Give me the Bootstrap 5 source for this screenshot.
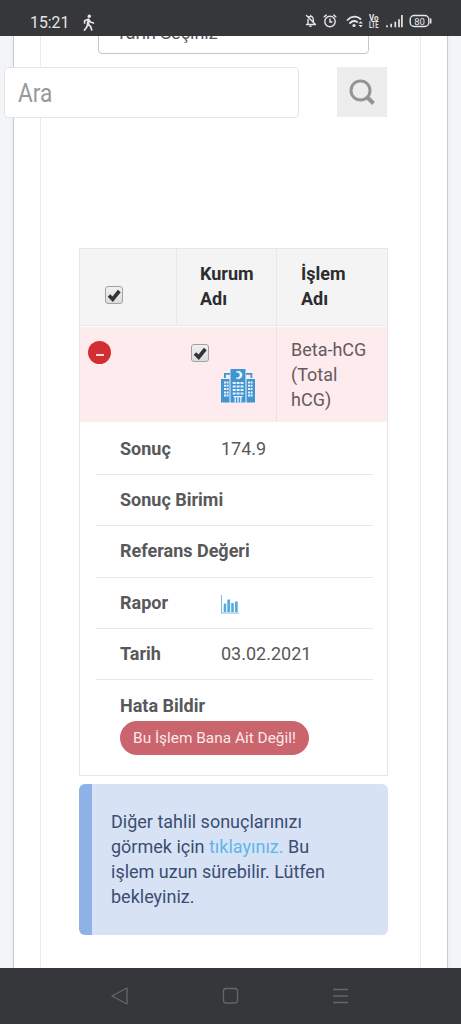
<!DOCTYPE html>
<html lang="tr">
<head>
<meta charset="utf-8">
<meta name="viewport" content="width=device-width, initial-scale=1">
<title>Tahlil Sonuçları</title>
<link href="https://cdn.jsdelivr.net/npm/bootstrap@5.3.0/dist/css/bootstrap.min.css" rel="stylesheet">
<style>
body{font-family:Roboto,"Liberation Sans",sans-serif;font-size:18px;line-height:25px;color:#58585b;background:#f3f5f8}
svg{display:block;flex:none}
.screen{height:1024px}
.statusbar{height:36px;background:#36373a;color:#e6e6e6;padding:10px 29px 0 30px;z-index:3}
.clock{font-size:15.800px;width:53px;line-height:26px}
.page{height:932px}
.sheet{margin:0 13px;height:932px;background:#fff;border:1px solid #c9cccf;border-width:0 1px;padding:0 26px;box-shadow:0 0 3px #e4e6ea}
.panel{height:932px;border:1px solid #ebebed;border-width:0 1px;padding:0 32px 0 38px}
.date-field{height:34px;margin:-16px 19px 0;border:1px solid #c4c7ca;border-radius:4px;padding:0 17px;line-height:23px;color:#555}
.searchbar{top:31px;left:4px;width:383px}
.search-input{width:295px;height:51px;border:1px solid #e4e5e7;border-radius:4px;background:#fff;padding:0 13px;color:#999;font-size:26px;line-height:51px}
.search-input span{display:inline-block;transform:scaleX(.87);transform-origin:0 50%}
.search-btn{width:50px;height:50px;background:#ededee}
.results{margin-top:194px;width:309px;border:1px solid #e4e6e8}
.cols{display:grid;grid-template-columns:97px 100px 1fr}
.head{height:77px;background:#f4f4f5;color:#2d2d30;font-weight:700;border-bottom:1px solid #e6e8ea}
.head>div{border-right:1px solid #e6e8ea}
.head>div:last-child{border-right:0}
.hit{height:95px;background:#feebed;margin-top:1px;color:#655a5e}
.hit>div:nth-child(2){border-right:1px solid #f0dfe2}
.tick{width:18px;height:18px;border:1px solid #a2a2a4;border-radius:3px;background:linear-gradient(#efeff0,#dcdcdd)}
.minus{width:23px;height:23px;border-radius:50%;background:#d32f32}
.minus i{width:8px;height:2px;background:#fbdada}
.detail{margin:0 14px 0 16px}
.line{height:51.300px;padding:12px 24px 0;border-bottom:1px solid #e9e9eb}
.line:first-child{height:53px;padding-top:14px}
.line:last-child{border:0;height:95px;padding-top:13px}
.line b{display:block;width:101px;white-space:nowrap;font-weight:700}
.report{width:189px;height:34px;margin-top:3px;border-radius:17px;background:#ca646d;color:#fbe9ea;font-size:15.400px;border:0;padding:0}
.note{width:309px;height:151px;margin-top:8px;border-radius:6px;background:#d7e3f5;border-left:13px solid #8eb2e7;color:#3b4d72;padding:25px 19px}
.note a{color:#62b5ea;text-decoration:none}
.navbtns{height:56px;background:#36373a;z-index:3}
</style>
</head>
<body>
<div class="screen d-flex flex-column overflow-hidden">
  <header class="statusbar d-flex position-relative">
    <span class="clock">15:21</span>
    <svg width="12" height="18" viewBox="0 0 12 18" style="margin-top:4px" fill="none" stroke="#e6e6e6" stroke-width="1.700" stroke-linecap="round" stroke-linejoin="round"><circle cx="6.300" cy="2.300" r="1.700" fill="#e6e6e6" stroke="none"/><path d="M1.600 9V6.800L5.300 5.200 7.500 8l3 1M4.700 10l3 2.600L8.700 16M4.500 10.500L3.800 13 1.500 16"/><path stroke-width="2.600" d="M5.600 6L5 10"/></svg>
    <svg class="ms-auto" width="127" height="20" viewBox="305 12 127 20" fill="none" stroke="#e6e6e6" stroke-width="1.400" stroke-linecap="round">
      <path d="M306.500 26.500h8M308 26v-4.500M308.500 19.500c1-1.500 3.500-1.500 4.300 0 .6 1 .5 3 .7 4M310 28.300h1M310.700 17.500v1M306.500 17.500l9 9"/>
      <circle cx="330" cy="23.500" r="5.200"/><path d="M330 21v3h2M324.200 18.800l2-1.700M335.800 18.800l-2-1.700"/>
      <path stroke-width="1.800" d="M347.500 22c4-4.300 9.500-4.300 13-1M350 25c2.500-2.500 5-2.500 7.200-1"/><circle cx="354" cy="27.500" r="1.600" fill="#e6e6e6" stroke="none"/>
      <path d="M358.500 25.500l2.200-2.200 2.200 2.200zM358.500 27l2.200 2.200 2.200-2.200z" fill="#e6e6e6" stroke="none"/>
      <g fill="#e6e6e6" stroke="none" font-family="Roboto,sans-serif" font-weight="700" font-size="8.500"><text x="369" y="22.600" textLength="9.500" lengthAdjust="spacingAndGlyphs">Vo</text><text x="369" y="29.500" textLength="9.500" lengthAdjust="spacingAndGlyphs">LTE</text></g>
      <path stroke-width="1.700" stroke-linecap="butt" d="M387 29.300v-2M391.200 29.300v-3.500M395.300 29.300v-5.500M399 29.300v-8M401.900 29.300V17"/>
      <rect x="410.200" y="17.500" width="18.600" height="11" rx="4"/><path d="M430.700 21v4" stroke-width="1.500"/>
      <text x="414.200" y="26.500" fill="#e6e6e6" stroke="none" font-family="Roboto,sans-serif" font-size="9.500">80</text>
    </svg>
  </header>

  <main class="page position-relative overflow-hidden">
    <div class="sheet">
      <div class="panel overflow-hidden">
        <div class="date-field">Tarih Seçiniz</div>

        <section class="results">
          <div class="head cols">
            <div><div class="tick" style="margin:37px 0 0 25px"><svg width="16" height="16" viewBox="0 0 16 16"><path d="M3 8.500l3.700 3.700L13.300 4" fill="none" stroke="#333" stroke-width="3.600"/></svg></div></div>
            <div class="pt-2"><div style="padding:4px 0 0 23px">Kurum<br>Adı</div></div>
            <div class="pt-2"><div style="padding:4px 0 0 24px">İşlem<br>Adı</div></div>
          </div>
          <div class="hit cols">
            <div><div class="minus d-flex align-items-center justify-content-center" style="margin:14px 0 0 8px"><i class="mt-1"></i></div></div>
            <div>
              <div class="tick" style="margin:17px 0 0 14px"><svg width="16" height="16" viewBox="0 0 16 16"><path d="M3 8.500l3.700 3.700L13.300 4" fill="none" stroke="#333" stroke-width="3.600"/></svg></div>
              <svg width="34" height="35" viewBox="0 0 34 35" style="margin:6px 0 0 44px" fill="#4096d3">
                <path d="M0 11h8.500v23.500H0zM9.500 1h15v33.500h-15zM25.500 11H34v23.500h-8.500zM3 5h6v1.800H4.800V10H3zM25 5h6.300v5h-1.800V6.800H25z"/>
                <path d="M15 4c2-1.500 6-.8 6 3s-4 4.500-6 3c2.500 0 4-1 4-3s-1.500-3-4-3z" fill="#fff" stroke="#fff" stroke-width=".5"/>
                <g stroke="#e9f1fa" stroke-width="2.200" fill="none"><path stroke-dasharray="3 .9" d="M11.700 15h11M11.700 18.500h11M11.700 22h11M11.700 25.500h11"/><path stroke-width="2" stroke-dasharray="2 .6" d="M3 14.500h5M3 17.800h5M3 21.100h5M3 24.400h5M3 27.500h5M27 14.500h5M27 17.800h5M27 21.100h5M27 24.400h5M27 27.500h5"/><path stroke-width="1.300" d="M12.500 28.700h9M14.200 29v5.500M17 29v5.500M19.800 29v5.500"/></g>
              </svg>
            </div>
            <div><div style="padding:10px 0 0 14px">Beta-hCG<br>(Total<br>hCG)</div></div>
          </div>
          <div class="detail">
            <div class="line d-flex"><b>Sonuç</b><span>174.9</span></div>
            <div class="line d-flex"><b>Sonuç Birimi</b></div>
            <div class="line d-flex"><b>Referans Değeri</b></div>
            <div class="line d-flex"><b>Rapor</b>
              <svg width="18" height="19" viewBox="0 0 18 19" style="margin-top:5px" fill="#58a9dc"><path d="M0 0h1v17.500h17v1H0z" opacity=".8"/><path d="M2.700 8.500h2.500V17H2.700zM6.300 4.500h2.800V17H6.300zM10.200 8h2.600v9h-2.600zM14 6.500h2.700V17H14z"/></svg>
            </div>
            <div class="line d-flex"><b>Tarih</b><span>03.02.2021</span></div>
            <div class="line"><b>Hata Bildir</b><button class="report d-block">Bu İşlem Bana Ait Değil!</button></div>
          </div>
        </section>

        <aside class="note">Diğer tahlil sonuçlarınızı<br>görmek için <a href="#">tıklayınız.</a> Bu<br>işlem uzun sürebilir. Lütfen<br>bekleyiniz.</aside>
      </div>
    </div>
    <div class="searchbar position-absolute d-flex justify-content-between">
      <div class="search-input"><span>Ara</span></div>
      <div class="search-btn d-flex align-items-center justify-content-center">
        <svg width="26" height="27" viewBox="0 0 26 27" fill="none" stroke="#949494"><circle cx="11.500" cy="11.500" r="9.500" stroke-width="3"/><path d="M18 18l6.500 6.500" stroke-width="4"/></svg>
      </div>
    </div>
  </main>

  <footer class="navbtns">
    <svg width="461" height="56" viewBox="0 968 461 56" fill="none" stroke="#65666a" stroke-width="1.300" stroke-linejoin="round"><path d="M127 988v16l-15-8z"/><rect x="223.500" y="988.500" width="14" height="14.500" rx="2.500"/><path d="M333 989.500h15M333 996h15M333 1002.500h15"/></svg>
  </footer>
</div>
<script src="https://cdn.jsdelivr.net/npm/bootstrap@5.3.0/dist/js/bootstrap.bundle.min.js"></script>
</body>
</html>
